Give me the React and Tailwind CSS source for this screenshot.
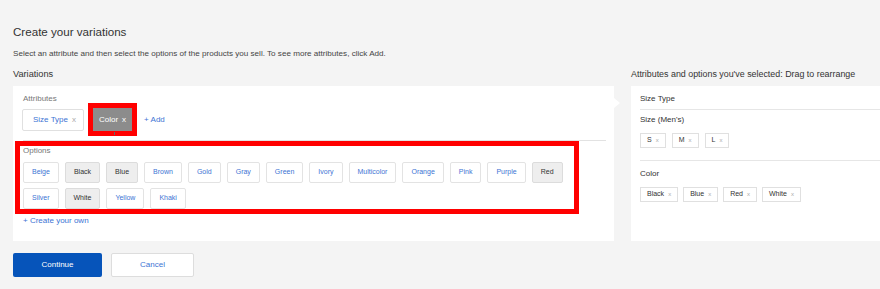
import React from "react";

const ROW_ONE = [
  ["Beige", false],
  ["Black", true],
  ["Blue", true],
  ["Brown", false],
  ["Gold", false],
  ["Gray", false],
  ["Green", false],
  ["Ivory", false],
  ["Multicolor", false],
  ["Orange", false],
  ["Pink", false],
  ["Purple", false],
  ["Red", true],
];

const ROW_TWO = [
  ["Silver", false],
  ["White", true],
  ["Yellow", false],
  ["Khaki", false],
];

function OptionChip({ label, selected }) {
  return (
    <div
      className={
        selected
          ? "h-[21px] min-w-[31px] px-[8px] flex items-center justify-center rounded-[2px] border border-[#dcdcdc] bg-[#eeeeee] text-[7px] text-[#333]"
          : "h-[21px] min-w-[31px] px-[8px] flex items-center justify-center rounded-[2px] border border-[#e3e3e3] bg-white text-[7px] text-[#3d74d4]"
      }
    >
      {label}
    </div>
  );
}

function SmallChip({ label }) {
  return (
    <div className="h-[15px] px-[6px] flex items-center gap-[4px] border border-[#e0e0e0] bg-white text-[7px] text-[#333]">
      <span>{label}</span>
      <span className="text-[6px] text-[#aaa]">x</span>
    </div>
  );
}

export default function App() {
  return (
    <div className="w-[880px] h-[289px] overflow-hidden bg-[#f4f4f4] font-['Liberation_Sans',Arial,sans-serif] text-[#333]">
      <div className="pl-[13px] pt-[25px]">
        <h1 className="text-[11.6px] leading-[14px] text-[#333]">Create your variations</h1>
        <p className="mt-[10px] text-[8.1px] leading-[10px] text-[#444]">
          Select an attribute and then select the options of the products you sell. To see more attributes, click Add.
        </p>

        <div className="mt-[9px] flex gap-[17px]">
          {/* LEFT */}
          <div className="w-[601px]">
            <div className="text-[9.2px] leading-[12px] text-[#333]">Variations</div>
            <div className="relative mt-[6px] h-[155px] bg-white">
              {/* notch */}
              <div className="absolute right-[-6px] top-[12px] w-0 h-0 border-y-[5px] border-y-transparent border-l-[6px] border-l-white" />

              <div className="pl-[10px] pt-[8px] text-[8px] leading-[9px] text-[#777]">Attributes</div>
              <div className="pl-[9px] flex items-center">
                <div className="h-[22px] pl-[10px] pr-[7px] flex items-center gap-[4px] rounded-[2px] border border-[#e0e0e0] bg-white text-[8px]">
                  <span className="text-[#3d74d4]">Size Type</span>
                  <span className="text-[#aaa]">x</span>
                </div>
                <div className="relative ml-[4px] border-[5px] border-[#ff0000]">
                  <div className="h-[23px] px-[6px] flex items-center gap-[4px] bg-[#8c8c8c] text-[8px] text-white">
                    <span>Color</span>
                    <span>x</span>
                  </div>
                  <div className="absolute left-[21px] bottom-[-4px] w-[1px] h-[3px] bg-[#666]" />
                </div>
                <span className="ml-[7px] text-[8px] text-[#3d74d4]">+ Add</span>
              </div>
              <div className="mt-[4px] ml-[10px] mr-[8px] h-px bg-[#e2e2e2]" />

              <div className="ml-[2px] w-[564px] border-[5px] border-[#ff0000] pl-[3px]">
                <div className="text-[8px] leading-[10px] text-[#777]">Options</div>
                <div className="mt-[6px] flex flex-col gap-[5px]">
                  <div className="flex gap-[6px]">
                    {ROW_ONE.map(([label, selected]) => (
                      <OptionChip key={label} label={label} selected={selected} />
                    ))}
                  </div>
                  <div className="flex gap-[6px]">
                    {ROW_TWO.map(([label, selected]) => (
                      <OptionChip key={label} label={label} selected={selected} />
                    ))}
                  </div>
                </div>
              </div>
              <div className="mt-[2px] pl-[10px] text-[8px] leading-[10px] text-[#3d74d4]">+ Create your own</div>
            </div>
          </div>

          {/* RIGHT */}
          <div className="flex-1">
            <div className="text-[8.9px] leading-[12px] text-[#333]">
              Attributes and options you've selected: Drag to rearrange
            </div>
            <div className="mt-[6px] h-[155px] bg-white pl-[9px]">
              <div className="pt-[8px] text-[8px] leading-[10px]">Size Type</div>
              <div className="mt-[5px] h-px bg-[#e6e6e6]" />
              <div className="mt-[5px] text-[8px] leading-[10px]">Size (Men's)</div>
              <div className="mt-[8px] flex gap-[6px]">
                <SmallChip label="S" />
                <SmallChip label="M" />
                <SmallChip label="L" />
              </div>
              <div className="mt-[12px] h-px bg-[#e6e6e6]" />
              <div className="mt-[8px] text-[8px] leading-[10px]">Color</div>
              <div className="mt-[8px] flex gap-[5px]">
                <SmallChip label="Black" />
                <SmallChip label="Blue" />
                <SmallChip label="Red" />
                <SmallChip label="White" />
              </div>
            </div>
          </div>
        </div>

        <div className="mt-[12px] flex gap-[9px]">
          <button className="w-[89px] h-[24px] rounded-[2px] bg-[#0654ba] text-[8px] text-white">Continue</button>
          <button className="w-[83px] h-[24px] rounded-[2px] border border-[#dddddd] bg-white text-[8px] text-[#3d74d4]">Cancel</button>
        </div>
      </div>
    </div>
  );
}
